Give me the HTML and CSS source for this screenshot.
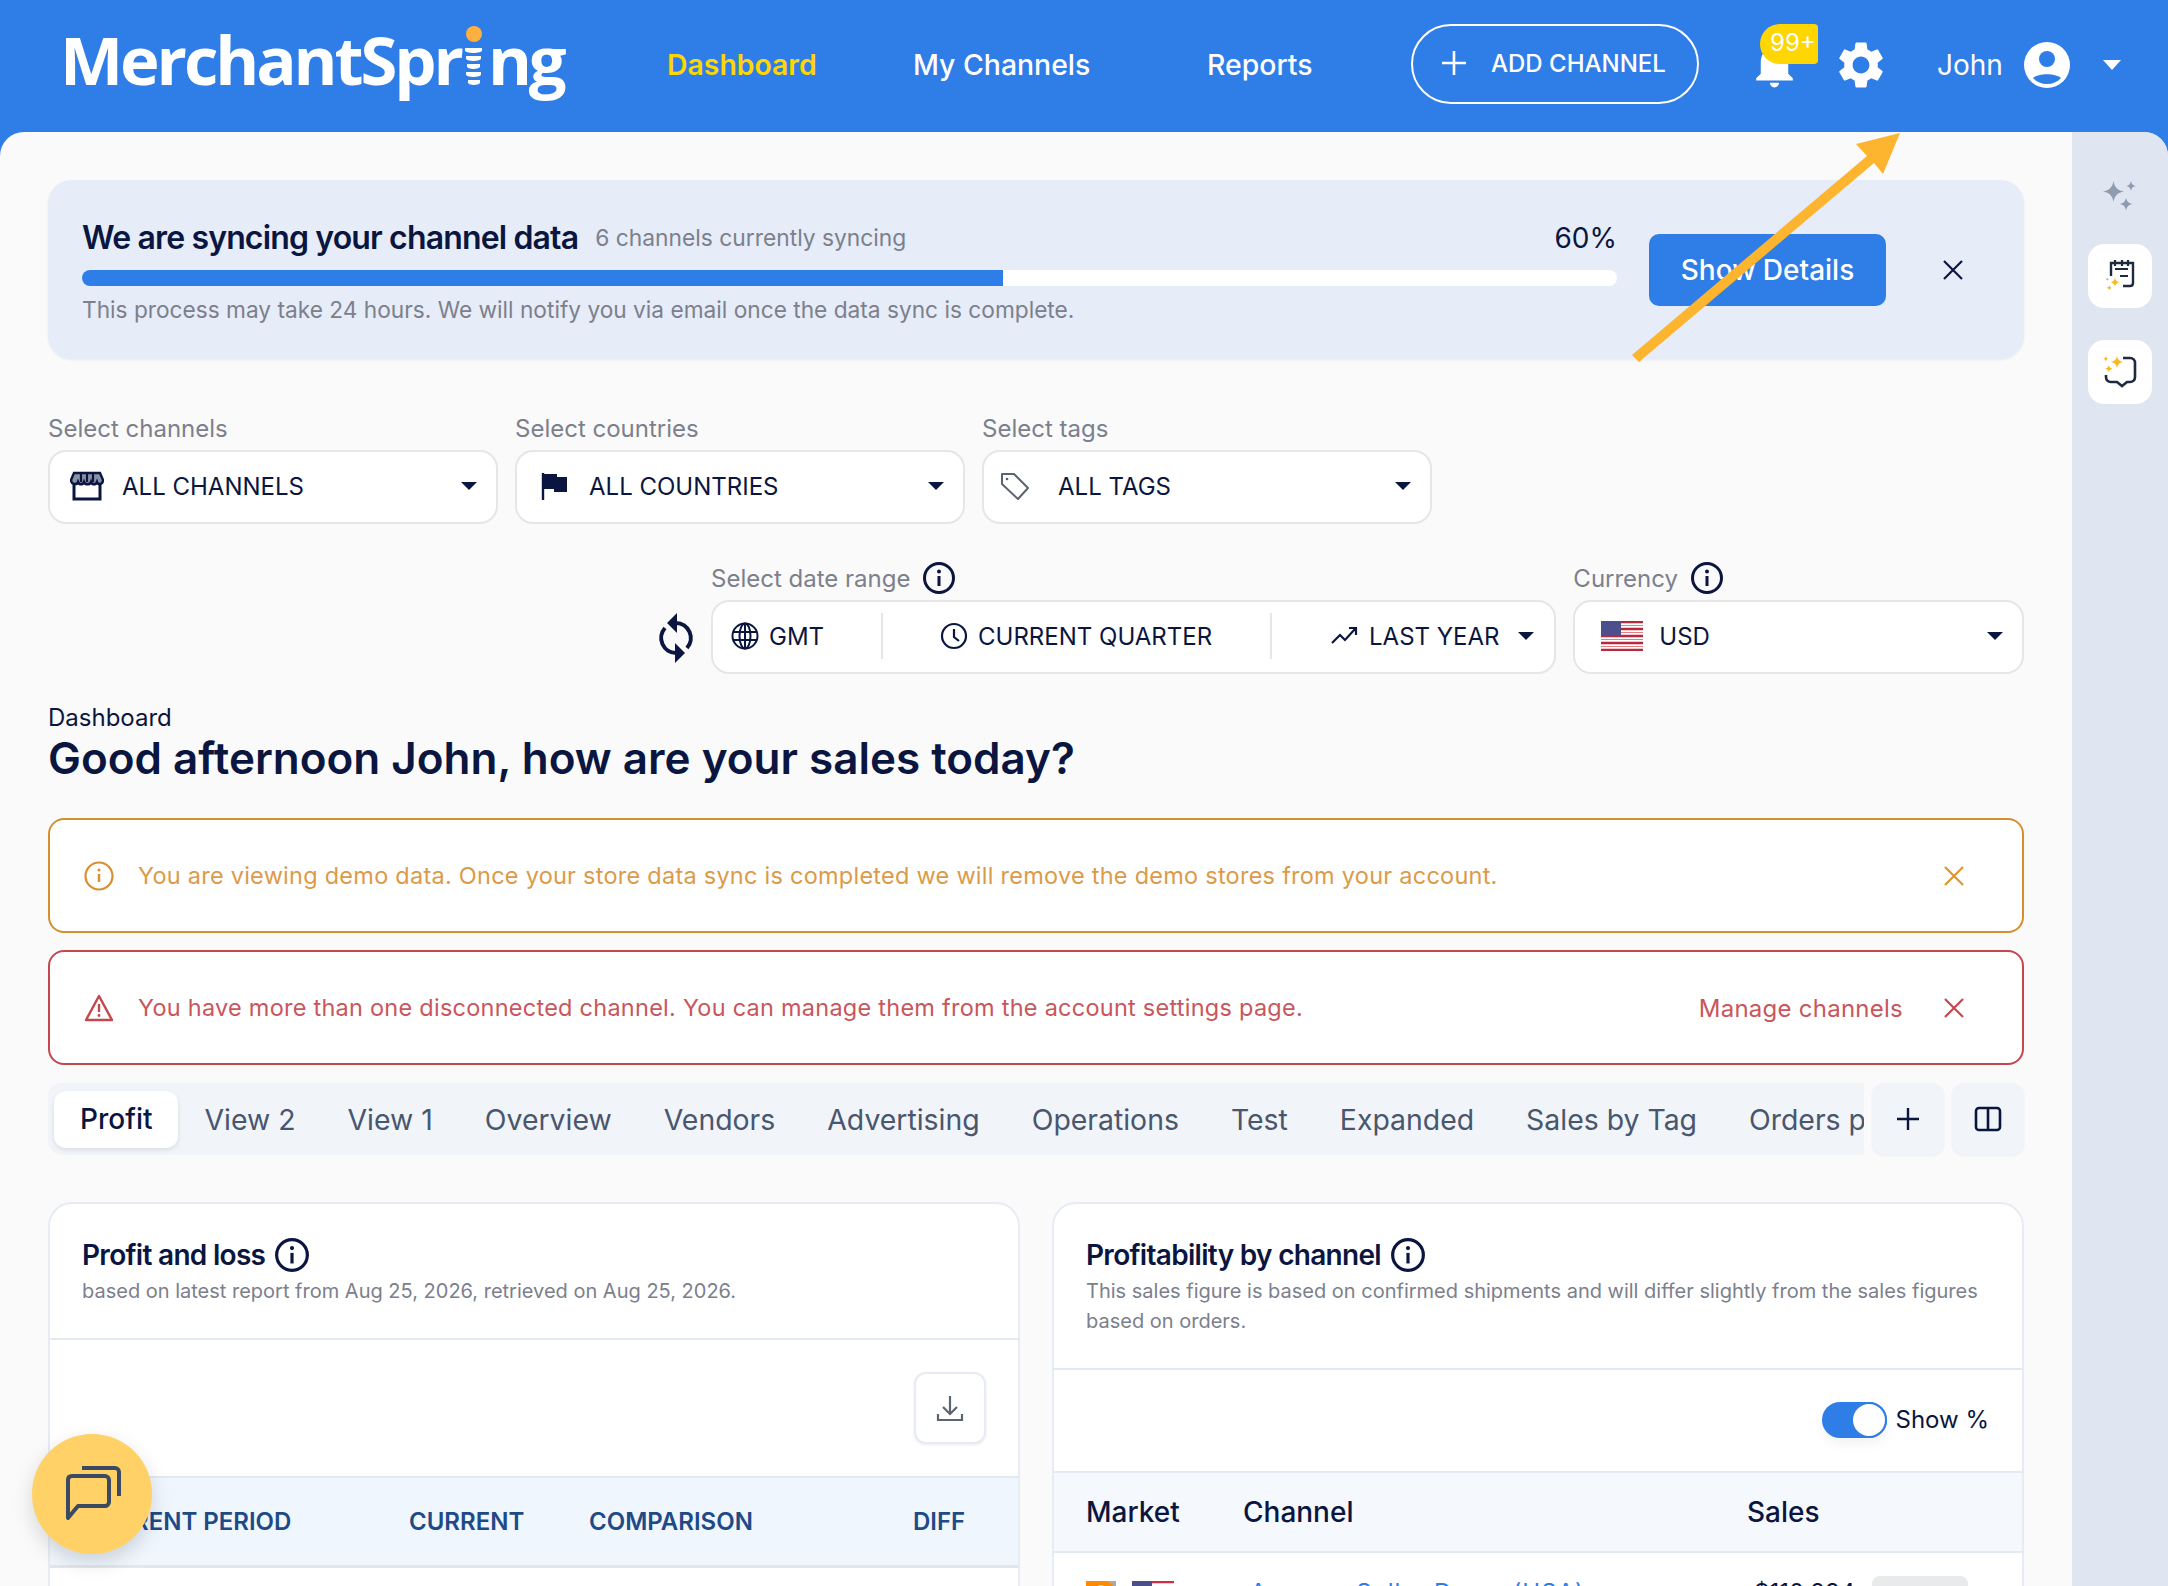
FILE: index.html
```html
<!DOCTYPE html>
<html lang="en">
<head>
    <meta charset="UTF-8">
    <meta name="viewport" content="width=device-width, initial-scale=1.0">
    <title>MerchantSpring Dashboard</title>
    <link rel="stylesheet" href="styles.css">
</head>
<body>

    <!-- Header -->
    <header class="topbar">
        <div class="logo">MerchantSpr<span class="logo-i"><span class="logo-dot"></span><span class="logo-bar b1"></span><span class="logo-bar b2"></span><span class="logo-bar b3"></span><span class="logo-bar b4"></span><span class="logo-bar b5"></span></span>ng</div>
        <nav class="nav">
            <a class="nav-link active">Dashboard</a>
            <a class="nav-link">My Channels</a>
            <a class="nav-link">Reports</a>
        </nav>
        <button class="add-channel">
            <svg width="26" height="26" viewBox="0 0 26 26"><path d="M13 1v24M1 13h24" stroke="#fff" stroke-width="2.6" fill="none"/></svg>
            ADD CHANNEL
        </button>
        <div class="bell">
            <svg width="55" height="55" viewBox="0 0 24 24"><path d="M12 22c1.100 0 2-.9 2-2h-4c0 1.100.9 2 2 2zm6-6v-5c0-3.100-1.600-5.600-4.500-6.300V4c0-.8-.7-1.500-1.500-1.500s-1.500.7-1.500 1.500v.7C7.600 5.400 6 7.900 6 11v5l-2 2v1h16v-1l-2-2z" fill="#fff"/></svg>
            <span class="badge">99+</span>
        </div>
        <svg class="gear" width="56" height="56" viewBox="0 0 24 24"><path fill="#fff" d="M19.140 12.940c.04-.3.060-.61.060-.94 0-.32-.02-.64-.07-.94l2.030-1.580a.49.49 0 0 0 .12-.61l-1.920-3.320a.488.488 0 0 0-.59-.22l-2.390.96c-.5-.38-1.030-.7-1.620-.94l-.36-2.540a.484.484 0 0 0-.48-.41h-3.840c-.24 0-.43.170-.47.410l-.36 2.540c-.59.240-1.130.570-1.620.94l-2.390-.96c-.22-.08-.47 0-.59.220L2.740 8.870c-.12.210-.08.470.12.610l2.030 1.580c-.05.300-.09.630-.09.940s.02.640.07.940l-2.030 1.580a.49.49 0 0 0-.12.610l1.920 3.320c.12.220.37.290.59.220l2.390-.96c.5.380 1.030.7 1.620.94l.36 2.540c.05.240.24.410.48.410h3.840c.24 0 .44-.17.470-.41l.36-2.540c.59-.24 1.130-.56 1.620-.94l2.390.96c.22.080.47 0 .59-.22l1.920-3.320c.12-.22.070-.47-.12-.61l-2.010-1.580zM12 15.600c-1.980 0-3.600-1.620-3.600-3.600s1.620-3.600 3.600-3.600 3.600 1.620 3.600 3.600-1.620 3.600-3.600 3.600z"/></svg>
        <div class="user">
            <span class="user-name">John</span>
            <svg width="46" height="46" viewBox="0 0 46 46"><circle cx="23" cy="23" r="23" fill="#fff"/><circle cx="23" cy="17" r="8" fill="#2f7de6"/><path d="M9 36c6-5 22-5 28 0-7 8-21 8-28 0z" fill="#2f7de6"/></svg>
            <span class="caret caret-white"></span>
        </div>
    </header>

    <div class="shell">
        <main class="content">

            <!-- Sync banner -->
            <section class="sync">
                <div class="sync-body">
                    <div class="sync-top">
                        <h3>We are syncing your channel data</h3>
                        <span class="sync-count">6 channels currently syncing</span>
                        <span class="sync-pct">60%</span>
                    </div>
                    <div class="progress"><div class="progress-fill" style="width:60%"></div></div>
                    <p>This process may take 24 hours. We will notify you via email once the data sync is complete.</p>
                </div>
                <button class="btn-primary">Show Details</button>
                <svg class="close-icon" width="22" height="22" viewBox="0 0 22 22"><path d="M2 2l18 18M20 2L2 20" stroke="#0b1640" stroke-width="2.2" fill="none"/></svg>
            </section>

            <!-- Filters -->
            <section class="filters">
                <div class="field">
                    <label>Select channels</label>
                    <div class="select">
                        <svg class="store-icon" width="34" height="30" viewBox="0 0 34 30"><path d="M4 11v17h26V11" fill="none" stroke="#0b1640" stroke-width="3"/><path d="M4 2h26l3 7c0 5-5 5-6 2-1 3-5 3-6 0-1 3-6 3-7 0-1 3-5 3-6 0-1 3-7 3-7-2z" fill="#8a93a6" stroke="#0b1640" stroke-width="2.4"/><path d="M11 3v8M17 3v8M23 3v8" stroke="#0b1640" stroke-width="2.200"/></svg>
                        <span class="select-text">ALL CHANNELS</span>
                        <span class="caret"></span>
                    </div>
                </div>
                <div class="field">
                    <label>Select countries</label>
                    <div class="select">
                        <svg class="country-icon" width="30" height="30" viewBox="0 0 30 30"><path d="M3 2v27" stroke="#0b1640" stroke-width="2.400"/><path d="M3 3h14v3h10v15H14v-3H3z" fill="#0b1640"/></svg>
                        <span class="select-text">ALL COUNTRIES</span>
                        <span class="caret"></span>
                    </div>
                </div>
                <div class="field">
                    <label>Select tags</label>
                    <div class="select">
                        <svg class="tag-icon" width="32" height="30" viewBox="0 0 32 30"><path d="M3 3h12l14 14-10 11L3 13z" fill="none" stroke="#5c6470" stroke-width="2" stroke-linejoin="round"/><circle cx="8" cy="8" r="1.300" fill="#5c6470"/></svg>
                        <span class="select-text tag-text">ALL TAGS</span>
                        <span class="caret"></span>
                    </div>
                </div>
            </section>

            <section class="filters-2">
                <svg class="refresh" width="40" height="52" viewBox="0 0 40 52">
                    <g fill="none" stroke="#0b1640" stroke-width="4"><path d="M20 11A15 15 0 0 1 31 36"/><path d="M20 41A15 15 0 0 1 9 16"/></g>
                    <path d="M21 1v20L11 11z" fill="#0b1640"/><path d="M19 31v20l10-10z" fill="#0b1640"/>
                </svg>
                <div class="field field-date">
                    <label>Select date range <svg class="info" width="34" height="34"><use href="#i-info"/></svg></label>
                    <div class="select date-select">
                        <span class="seg seg-gmt">
                            <svg width="28" height="28" viewBox="0 0 28 28"><g fill="none" stroke="#0b1640" stroke-width="2"><circle cx="14" cy="14" r="12.500"/><ellipse cx="14" cy="14" rx="5.500" ry="12.500"/><path d="M2 10h24M2 18h24M14 2v24"/></g></svg>
                            GMT
                        </span>
                        <span class="seg seg-quarter">
                            <svg width="28" height="28" viewBox="0 0 28 28"><g fill="none" stroke="#0b1640" stroke-width="2.200"><circle cx="14" cy="14" r="12"/><path d="M14 7v8l5 4"/></g></svg>
                            CURRENT QUARTER
                        </span>
                        <span class="seg seg-year">
                            <svg width="28" height="20" viewBox="0 0 28 20"><path d="M1 17l8-8 5 5 10-11M18 2h7v7" fill="none" stroke="#0b1640" stroke-width="2.200"/></svg>
                            LAST YEAR
                        </span>
                        <span class="caret"></span>
                    </div>
                </div>
                <div class="field field-currency">
                    <label>Currency <svg class="info" width="34" height="34"><use href="#i-info"/></svg></label>
                    <div class="select">
                        <svg class="flag" width="42" height="30" viewBox="0 0 42 30">
                            <rect width="42" height="30" fill="#fff"/>
                            <path d="M0 1h42M0 8h42M0 15h42M0 22h42M0 29h42" stroke="#b8293d" stroke-width="2.400"/>
                            <path d="M0 4.500h42M0 11.500h42M0 18.500h42M0 25.500h42" stroke="#d9606f" stroke-width=".8"/>
                            <rect width="20" height="15" fill="#4b4f8c"/>
                        </svg>
                        <span class="select-text usd">USD</span>
                        <span class="caret"></span>
                    </div>
                </div>
            </section>

            <!-- Heading -->
            <div class="crumb">Dashboard</div>
            <h1>Good afternoon John, how are your sales today?</h1>

            <!-- Alerts -->
            <div class="alert alert-warn">
                <svg width="30" height="30" viewBox="0 0 30 30"><circle cx="15" cy="15" r="13.500" fill="none" stroke="#d98f30" stroke-width="2.200"/><path d="M15 13v8" stroke="#d98f30" stroke-width="2.400"/><circle cx="15" cy="9" r="1.500" fill="#d98f30"/></svg>
                <span class="alert-text">You are viewing demo data. Once your store data sync is completed we will remove the demo stores from your account.</span>
                <svg class="close-icon" width="22" height="22" viewBox="0 0 22 22"><path d="M2 2l18 18M20 2L2 20" stroke="#e0952d" stroke-width="2.200" fill="none"/></svg>
            </div>
            <div class="alert alert-error">
                <svg width="30" height="30" viewBox="0 0 30 30"><path d="M15 3L2 27h26z" fill="none" stroke="#c4474d" stroke-width="2.400" stroke-linejoin="round"/><path d="M15 11v8" stroke="#c4474d" stroke-width="2.400"/><circle cx="15" cy="22.500" r="1.400" fill="#c4474d"/></svg>
                <span class="alert-text">You have more than one disconnected channel. You can manage them from the account settings page.</span>
                <a class="alert-link">Manage channels</a>
                <svg class="close-icon" width="22" height="22" viewBox="0 0 22 22"><path d="M2 2l18 18M20 2L2 20" stroke="#c4474d" stroke-width="2.200" fill="none"/></svg>
            </div>

            <!-- Tabs -->
            <div class="tabs-row">
                <div class="tabs">
                    <span class="tab active">Profit</span>
                    <span class="tab">View 2</span>
                    <span class="tab">View 1</span>
                    <span class="tab">Overview</span>
                    <span class="tab">Vendors</span>
                    <span class="tab">Advertising</span>
                    <span class="tab">Operations</span>
                    <span class="tab">Test</span>
                    <span class="tab">Expanded</span>
                    <span class="tab">Sales by Tag</span>
                    <span class="tab">Orders per Channel</span>
                </div>
                <button class="tab-btn"><svg width="24" height="24" viewBox="0 0 24 24"><path d="M12 1v22M1 12h22" stroke="#0b1640" stroke-width="2.400" fill="none"/></svg></button>
                <button class="tab-btn"><svg width="28" height="26" viewBox="0 0 28 26"><rect x="2" y="2" width="24" height="22" rx="3" fill="none" stroke="#0b1640" stroke-width="2.600"/><path d="M14 2v22" stroke="#0b1640" stroke-width="2.600"/></svg></button>
            </div>

            <!-- Cards -->
            <div class="cards">
                <section class="card">
                    <div class="card-head">
                        <h4>Profit and loss <svg class="info" width="36" height="36"><use href="#i-info"/></svg></h4>
                        <p>based on latest report from Aug 25, 2026, retrieved on Aug 25, 2026.</p>
                    </div>
                    <div class="card-tools">
                        <button class="download">
                            <svg width="28" height="28" viewBox="0 0 28 28"><path d="M14 2v17M7 13l7 7 7-7M2 20v6h24v-6" fill="none" stroke="#5c6470" stroke-width="2.200"/></svg>
                        </button>
                    </div>
                    <div class="pl-head">
                        <span class="pl-period">CURRENT PERIOD</span>
                        <span class="pl-current">CURRENT</span>
                        <span class="pl-comparison">COMPARISON</span>
                        <span class="pl-diff">DIFF</span>
                    </div>
                </section>
                <section class="card">
                    <div class="card-head">
                        <h4>Profitability by channel <svg class="info" width="36" height="36"><use href="#i-info"/></svg></h4>
                        <p>This sales figure is based on confirmed shipments and will differ slightly from the sales figures based on orders.</p>
                    </div>
                    <div class="card-tools tools-toggle">
                        <span class="toggle"><span class="knob"></span></span>
                        <span class="toggle-label">Show %</span>
                    </div>
                    <div class="ch-head">
                        <span class="ch-market">Market</span>
                        <span class="ch-channel">Channel</span>
                        <span>Sales</span>
                    </div>
                    <div class="ch-row">
                        <svg class="amz" width="30" height="30" viewBox="0 0 30 30"><rect width="30" height="30" fill="#ff8a00"/><path d="M22 0h8v8z" fill="#a9a9a9"/><circle cx="15" cy="10" r="6" fill="#ffd9a8"/></svg>
                        <svg class="flag-sm" width="42" height="30" viewBox="0 0 42 30"><rect width="42" height="30" fill="#fff"/><path d="M0 1h42M0 8h42M0 15h42M0 22h42M0 29h42" stroke="#cf2e45" stroke-width="2.400"/><rect width="20" height="15" fill="#4b4f8c"/></svg>
                        <a class="ch-link">Amazon Seller Demo (USA)</a>
                        <span class="ch-sales">$110,234</span>
                        <span class="ch-pill"></span>
                    </div>
                </section>
            </div>
        </main>

        <!-- Right rail -->
        <aside class="rail">
            <svg class="rail-spark" width="36" height="36" viewBox="0 0 36 36" fill="#8e9bb0"><use href="#i-spark" transform="translate(1 4) scale(1.050)"/><use href="#i-spark" transform="translate(24 4) scale(.5)"/><use href="#i-spark" transform="translate(17.500 20.500) scale(.66)"/></svg>
            <button class="rail-btn">
                <svg width="36" height="36" viewBox="0 0 36 36"><path d="M9 18V5h22v20c0 2-1 3-3 3h-7" fill="none" stroke="#1e2a3d" stroke-width="2.400"/><path d="M13 2v6M20 2v6M26 2v6M13 11h13M18 18h8" stroke="#1e2a3d" stroke-width="2.200"/><g fill="#fbb81f"><use href="#i-spark" transform="translate(8.500 19.800) scale(.45)"/><use href="#i-spark" transform="translate(3.300 19.300) scale(.2)"/><use href="#i-spark" transform="translate(4.500 27) scale(.28)"/></g></svg>
            </button>
            <button class="rail-btn">
                <svg width="36" height="36" viewBox="0 0 36 36"><path d="M21 4h7c3 0 5 2 5 5v14c0 3-2 5-5 5h-3l-5 4-5-4H9c-3 0-5-2-5-5v-2" fill="none" stroke="#1e2a3d" stroke-width="2.600"/><g fill="#fbb81f"><use href="#i-spark" transform="translate(9 2) scale(.6)"/><use href="#i-spark" transform="translate(1 2) scale(.28)"/><use href="#i-spark" transform="translate(3 11) scale(.38)"/></g></svg>
            </button>
        </aside>
    </div>

    <!-- Floating chat button -->
    <button class="fab">
        <svg width="58" height="56" viewBox="0 0 58 56"><path d="M5 52V14c0-2 1-4 4-4h33c2 0 4 2 4 4v22c0 2-2 4-4 4H15z" fill="none" stroke="#3a4a62" stroke-width="4" stroke-linejoin="round"/><path d="M19 2h33c2 0 4 2 4 4v24" fill="none" stroke="#3a4a62" stroke-width="4"/></svg>
    </button>

    <!-- Annotation arrow -->
    <svg class="arrow" width="280" height="240" viewBox="0 0 280 240"><path d="M2 225L237 26 226 14 270 3 253 44 244 33 9 232z" fill="#fdb42f"/></svg>

    <!-- Shared symbols -->
    <svg class="defs" width="0" height="0">
        <symbol id="i-info" viewBox="0 0 34 34"><circle cx="17" cy="17" r="14.500" fill="none" stroke="#0b1640" stroke-width="3"/><rect x="15.500" y="15" width="3" height="10" fill="#0b1640"/><circle cx="17" cy="10.500" r="2" fill="#0b1640"/></symbol>
        <symbol id="i-spark" viewBox="0 0 20 20" width="20" height="20"><path d="M10 0c1 6 4 9 10 10-6 1-9 4-10 10-1-6-4-9-10-10 6-1 9-4 10-10z"/></symbol>
    </svg>

</body>
</html>
```

FILE: styles.css
```css
* {
    box-sizing: border-box;
}

html, body {
    height: 1586px;
    overflow: hidden;
}

body {
    font-family: Inter, 'Liberation Sans', sans-serif;
    margin: 0;
    padding: 0;
    background-color: #2f7de6;
    color: #0b1640;
    position: relative;
}

button {
    font-family: inherit;
    cursor: pointer;
}

/* Header */
.topbar {
    height: 132px;
    display: flex;
    align-items: center;
    padding-left: 60px;
    color: white;
}

.logo {
    font-family: 'Open Sans', sans-serif;
    font-size: 67px;
    font-weight: 700;
    letter-spacing: -3.1px;
    width: 607px;
    height: 72px;
    line-height: 72px;
    margin-top: -14px;
    white-space: nowrap;
}

.logo-i {
    display: inline-block;
    overflow: hidden;
    vertical-align: baseline;
    width: 22px;
    height: 61px;
    margin: 0 3px -2px 2px;
}

.logo-dot {
    display: block;
    width: 16px;
    height: 16px;
    border-radius: 50%;
    background: #fdb040;
    margin: 0 auto 6px;
}

.logo-bar {
    display: block;
    background: white;
    height: 5px;
    margin: 0 auto 3px;
    border-radius: 0 0 50% 50%;
}

.b1 { width: 17px; }
.b2 { width: 15px; }
.b3 { width: 13px; }
.b4 { width: 15px; }
.b5 { width: 12px; }

.nav {
    display: flex;
    font-size: 28.4px;
    font-weight: 500;
    margin-top: -3px;
}

.nav-link {
    display: block;
    white-space: nowrap;
}

.nav-link:nth-child(1) { width: 246px; }
.nav-link:nth-child(2) { width: 294px; }
.nav-link:nth-child(3) { width: 204px; }

.nav-link.active {
    color: #ffd600;
    font-weight: 600;
}

.add-channel {
    width: 288px;
    height: 80px;
    border: 2px solid white;
    border-radius: 40px;
    background: none;
    color: white;
    font-size: 24px;
    font-weight: 500;
    display: flex;
    align-items: center;
    gap: 24px;
    padding: 0 0 2px 28px;
    white-space: nowrap;
    margin-top: -4px;
}

.bell {
    position: relative;
    width: 55px;
    height: 55px;
    margin-left: 48px;
    margin-top: -3px;
}

.badge {
    position: absolute;
    left: 13px;
    top: -13px;
    width: 58px;
    height: 40px;
    background: #ffd600;
    border-radius: 20px 4px 4px 20px;
    color: white;
    font-size: 24px;
    line-height: 38px;
    padding-left: 10px;
    white-space: nowrap;
    overflow: hidden;
}

.gear {
    margin-left: 31px;
    margin-top: -3px;
}

.user {
    display: flex;
    align-items: center;
    font-size: 28px;
    margin-left: 48px;
    margin-top: -3px;
}

.user-name {
    margin-right: 21px;
}

.caret {
    width: 0;
    height: 0;
    border-left: 8px solid transparent;
    border-right: 8px solid transparent;
    border-top: 8px solid #0b1640;
    flex-shrink: 0;
}

.caret-white {
    border-left-width: 9px;
    border-right-width: 9px;
    border-top: 10px solid white;
    margin-left: 33px;
}

/* Page shell */
.shell {
    display: flex;
    height: 1454px;
    background: #fafafa;
    border-radius: 24px 24px 0 0;
    overflow: hidden;
}

.content {
    width: 2072px;
    padding: 48px 48px 0 48px;
    flex-shrink: 0;
}

.rail {
    flex: 1;
    background: #dfe6f1;
    display: flex;
    flex-direction: column;
    align-items: center;
    padding-top: 45px;
}

.rail-spark {
    margin-bottom: 31px;
}

.rail-btn {
    width: 64px;
    height: 64px;
    border: none;
    border-radius: 16px;
    background: white;
    margin-bottom: 32px;
    padding: 0;
    display: flex;
    align-items: center;
    justify-content: center;
}

/* Sync banner */
.sync {
    height: 179px;
    background: #e6ecf8;
    border-radius: 24px;
    box-shadow: 0 1px 3px rgba(0, 0, 0, 0.07);
    display: flex;
    align-items: center;
    padding: 0 0 0 34px;
}

.sync-body {
    width: 1535px;
    flex-shrink: 0;
}

.sync-top {
    display: flex;
    align-items: center;
    height: 46px;
    padding-top: 4px;
}

.sync-top h3 {
    margin: 0;
    font-size: 32px;
    font-weight: 600;
    letter-spacing: -0.85px;
    white-space: nowrap;
}

.sync-count {
    font-size: 22.8px;
    color: #7c808c;
    margin-left: 17px;
    white-space: nowrap;
}

.sync-pct {
    margin-left: auto;
    font-size: 28px;
}

.progress {
    height: 16px;
    background: white;
    border-radius: 8px;
    overflow: hidden;
    margin-top: 11px;
}

.progress-fill {
    height: 100%;
    background: #2f7de6;
}

.sync-body p {
    margin: 7px 0 0;
    font-size: 22.7px;
    line-height: 34px;
    color: #7c808c;
    white-space: nowrap;
}

.btn-primary {
    width: 237px;
    height: 72px;
    margin-left: 32px;
    background: #2f7de6;
    color: white;
    border: none;
    border-radius: 10px;
    font-size: 28px;
    font-weight: 500;
    flex-shrink: 0;
}

.sync .close-icon {
    margin-left: 56px;
}

/* Filters */
.field label {
    display: flex;
    align-items: center;
    gap: 12px;
    height: 36px;
    font-size: 24px;
    color: #7c808c;
    white-space: nowrap;
}

.select {
    height: 74px;
    margin-top: 4px;
    background: white;
    border: 2px solid #e6e6e6;
    border-radius: 18px;
    display: flex;
    align-items: center;
    padding: 0 19px 2px 20px;
    font-size: 24px;
    white-space: nowrap;
}

.select svg {
    flex-shrink: 0;
}

.select-text {
    margin-left: 19px;
    flex: 1;
}

.filters {
    display: flex;
    gap: 17px;
    margin-top: 51px;
}

.filters .field {
    width: 450px;
}

.store-icon {
    margin-right: -1px;
}

.country-icon {
    margin-left: 3px;
}

.tag-icon {
    margin-left: -5px;
}

.tag-text {
    margin-left: 27px;
}

.filters-2 {
    display: flex;
    align-items: flex-end;
    margin-top: 36px;
    padding-left: 608px;
}

.refresh {
    margin-right: 15px;
    margin-bottom: 10px;
    flex-shrink: 0;
}

.field-date {
    width: 846px;
}

.field-currency {
    width: 451px;
    margin-left: 17px;
}

.usd {
    margin-left: 16px;
}

.field-currency .flag {
    margin-left: 6px;
}

.date-select {
    padding: 0 18px 2px;
}

.seg {
    display: flex;
    align-items: center;
    gap: 10px;
    height: 46px;
}

.seg-gmt {
    width: 152px;
    border-right: 2px solid #e6e6e6;
}

.seg-quarter {
    width: 389px;
    padding-left: 57px;
    border-right: 2px solid #e6e6e6;
}

.seg-year {
    width: 246px;
    padding-left: 59px;
}

.crumb {
    margin-top: 29px;
    font-size: 24px;
    line-height: 30px;
}

h1 {
    margin: -1px 0 0;
    font-size: 44px;
    font-weight: 600;
    line-height: 52px;
}

/* Alerts */
.alert {
    height: 115px;
    margin-top: 17px;
    border: 2px solid;
    border-radius: 16px;
    display: flex;
    align-items: center;
    padding: 0 57px 0 34px;
    font-size: 23.5px;
    letter-spacing: 0.25px;
    background: white;
}

.alert-warn {
    margin-top: 34px;
    border-color: #d68f2f;
    color: #dc9a48;
}

.alert-error {
    border-color: #c4474d;
    color: #c9565b;
}

.alert-text {
    margin-left: 24px;
    flex: 1;
    white-space: nowrap;
}

.alert-link {
    margin-right: 40px;
    margin-top: 2px;
    font-size: 24px;
    white-space: nowrap;
}

/* Tabs */
.tabs-row {
    display: flex;
    margin-top: 18px;
    height: 72px;
}

.tabs {
    width: 1816px;
    background: #f1f4f9;
    border-radius: 14px 0 0 14px;
    display: flex;
    align-items: center;
    padding-left: 6px;
    overflow: hidden;
    font-size: 28.4px;
    white-space: nowrap;
}

.tab {
    padding: 0 26px;
    color: #48566e;
    flex-shrink: 0;
    line-height: 55px;
}

.tab.active {
    background: white;
    color: #0b1640;
    border-radius: 12px;
    box-shadow: 0 2px 5px rgba(0, 0, 0, 0.1);
    font-weight: 500;
    font-size: 28px;
    line-height: 57px;
}

.tab-btn {
    width: 72px;
    height: 72px;
    margin-left: 8px;
    border: none;
    background: #f1f4f9;
    border-radius: 12px;
    padding: 0;
    box-shadow: 0 1px 3px rgba(0, 0, 0, 0.05);
    display: flex;
    align-items: center;
    justify-content: center;
}

/* Cards */
.cards {
    display: flex;
    gap: 32px;
    margin-top: 47px;
}

.card {
    flex: 1;
    height: 500px;
    background: white;
    border: 2px solid #e6ebf4;
    border-radius: 24px 24px 0 0;
}

.card:first-child {
    flex: 0 0 972px;
}

.card-head {
    padding: 33px 32px 0;
    border-bottom: 2px solid #e3e9f3;
}

.card:first-child .card-head {
    height: 136px;
}

.card:last-child .card-head {
    height: 166px;
}

.card-head h4 {
    margin: 0;
    font-size: 28px;
    font-weight: 600;
    letter-spacing: -0.7px;
    line-height: 36px;
    display: flex;
    align-items: center;
    gap: 9px;
}

.card-head p {
    margin: 3px 0 0;
    font-size: 20px;
    line-height: 30px;
    color: #7c808c;
}

.card-tools {
    height: 138px;
    display: flex;
    align-items: center;
    justify-content: flex-end;
    padding-right: 32px;
    border-bottom: 2px solid #e3e9f3;
}

.download {
    width: 72px;
    height: 72px;
    background: white;
    border: 2px solid #e6ebf4;
    border-radius: 12px;
    padding: 0;
    box-shadow: 0 1px 3px rgba(0, 0, 0, 0.08);
    display: flex;
    align-items: center;
    justify-content: center;
}

.tools-toggle {
    height: 103px;
    padding-right: 33px;
    padding-bottom: 2px;
    gap: 8px;
}

.toggle {
    width: 65px;
    height: 36px;
    background: #2f7de6;
    border-radius: 18px;
    position: relative;
    box-shadow: 0 6px 12px rgba(0, 0, 0, 0.05);
}

.knob {
    position: absolute;
    right: 0;
    top: 0;
    width: 36px;
    height: 36px;
    border-radius: 50%;
    background: white;
    border: 2px solid #2f7de6;
}

.toggle-label {
    font-size: 24px;
}

.pl-head {
    height: 90px;
    background: #eff6fe;
    border-bottom: 3px solid #e3e6ea;
    display: flex;
    align-items: center;
    font-size: 24px;
    font-weight: 600;
    color: #1e4a86;
    white-space: nowrap;
}

.pl-period {
    margin-left: 32px;
    width: 327px;
}

.pl-current {
    width: 180px;
}

.pl-comparison {
    width: 324px;
}

.ch-head {
    height: 80px;
    background: #f5f8fc;
    border-bottom: 2px solid #e3e9f3;
    display: flex;
    align-items: center;
    padding-left: 32px;
    font-size: 28px;
    font-weight: 500;
}

.ch-market {
    width: 157px;
}

.ch-channel {
    width: 504px;
}

.ch-row {
    display: flex;
    align-items: flex-start;
    padding: 28px 0 0 32px;
    font-size: 24px;
    white-space: nowrap;
}

.amz {
    margin-right: 16px;
    flex-shrink: 0;
}

.flag-sm {
    flex-shrink: 0;
}

.ch-link {
    margin-left: 76px;
    margin-top: -3px;
    width: 504px;
    color: #2f7de6;
    letter-spacing: 1px;
}

.ch-sales {
    width: 118px;
    margin-top: -3px;
}

.ch-pill {
    width: 96px;
    height: 40px;
    background: #e9eaec;
    border-radius: 8px;
    margin-top: -5px;
}

/* Things lying over the page */
.fab {
    position: absolute;
    left: 32px;
    top: 1434px;
    width: 120px;
    height: 120px;
    border: none;
    border-radius: 50%;
    background: #ffd166;
    box-shadow: 0 8px 20px rgba(0, 0, 0, 0.15);
    padding: 0;
    display: flex;
    align-items: center;
    justify-content: center;
}

.arrow {
    position: absolute;
    left: 1630px;
    top: 130px;
}

.defs {
    position: absolute;
}
```
